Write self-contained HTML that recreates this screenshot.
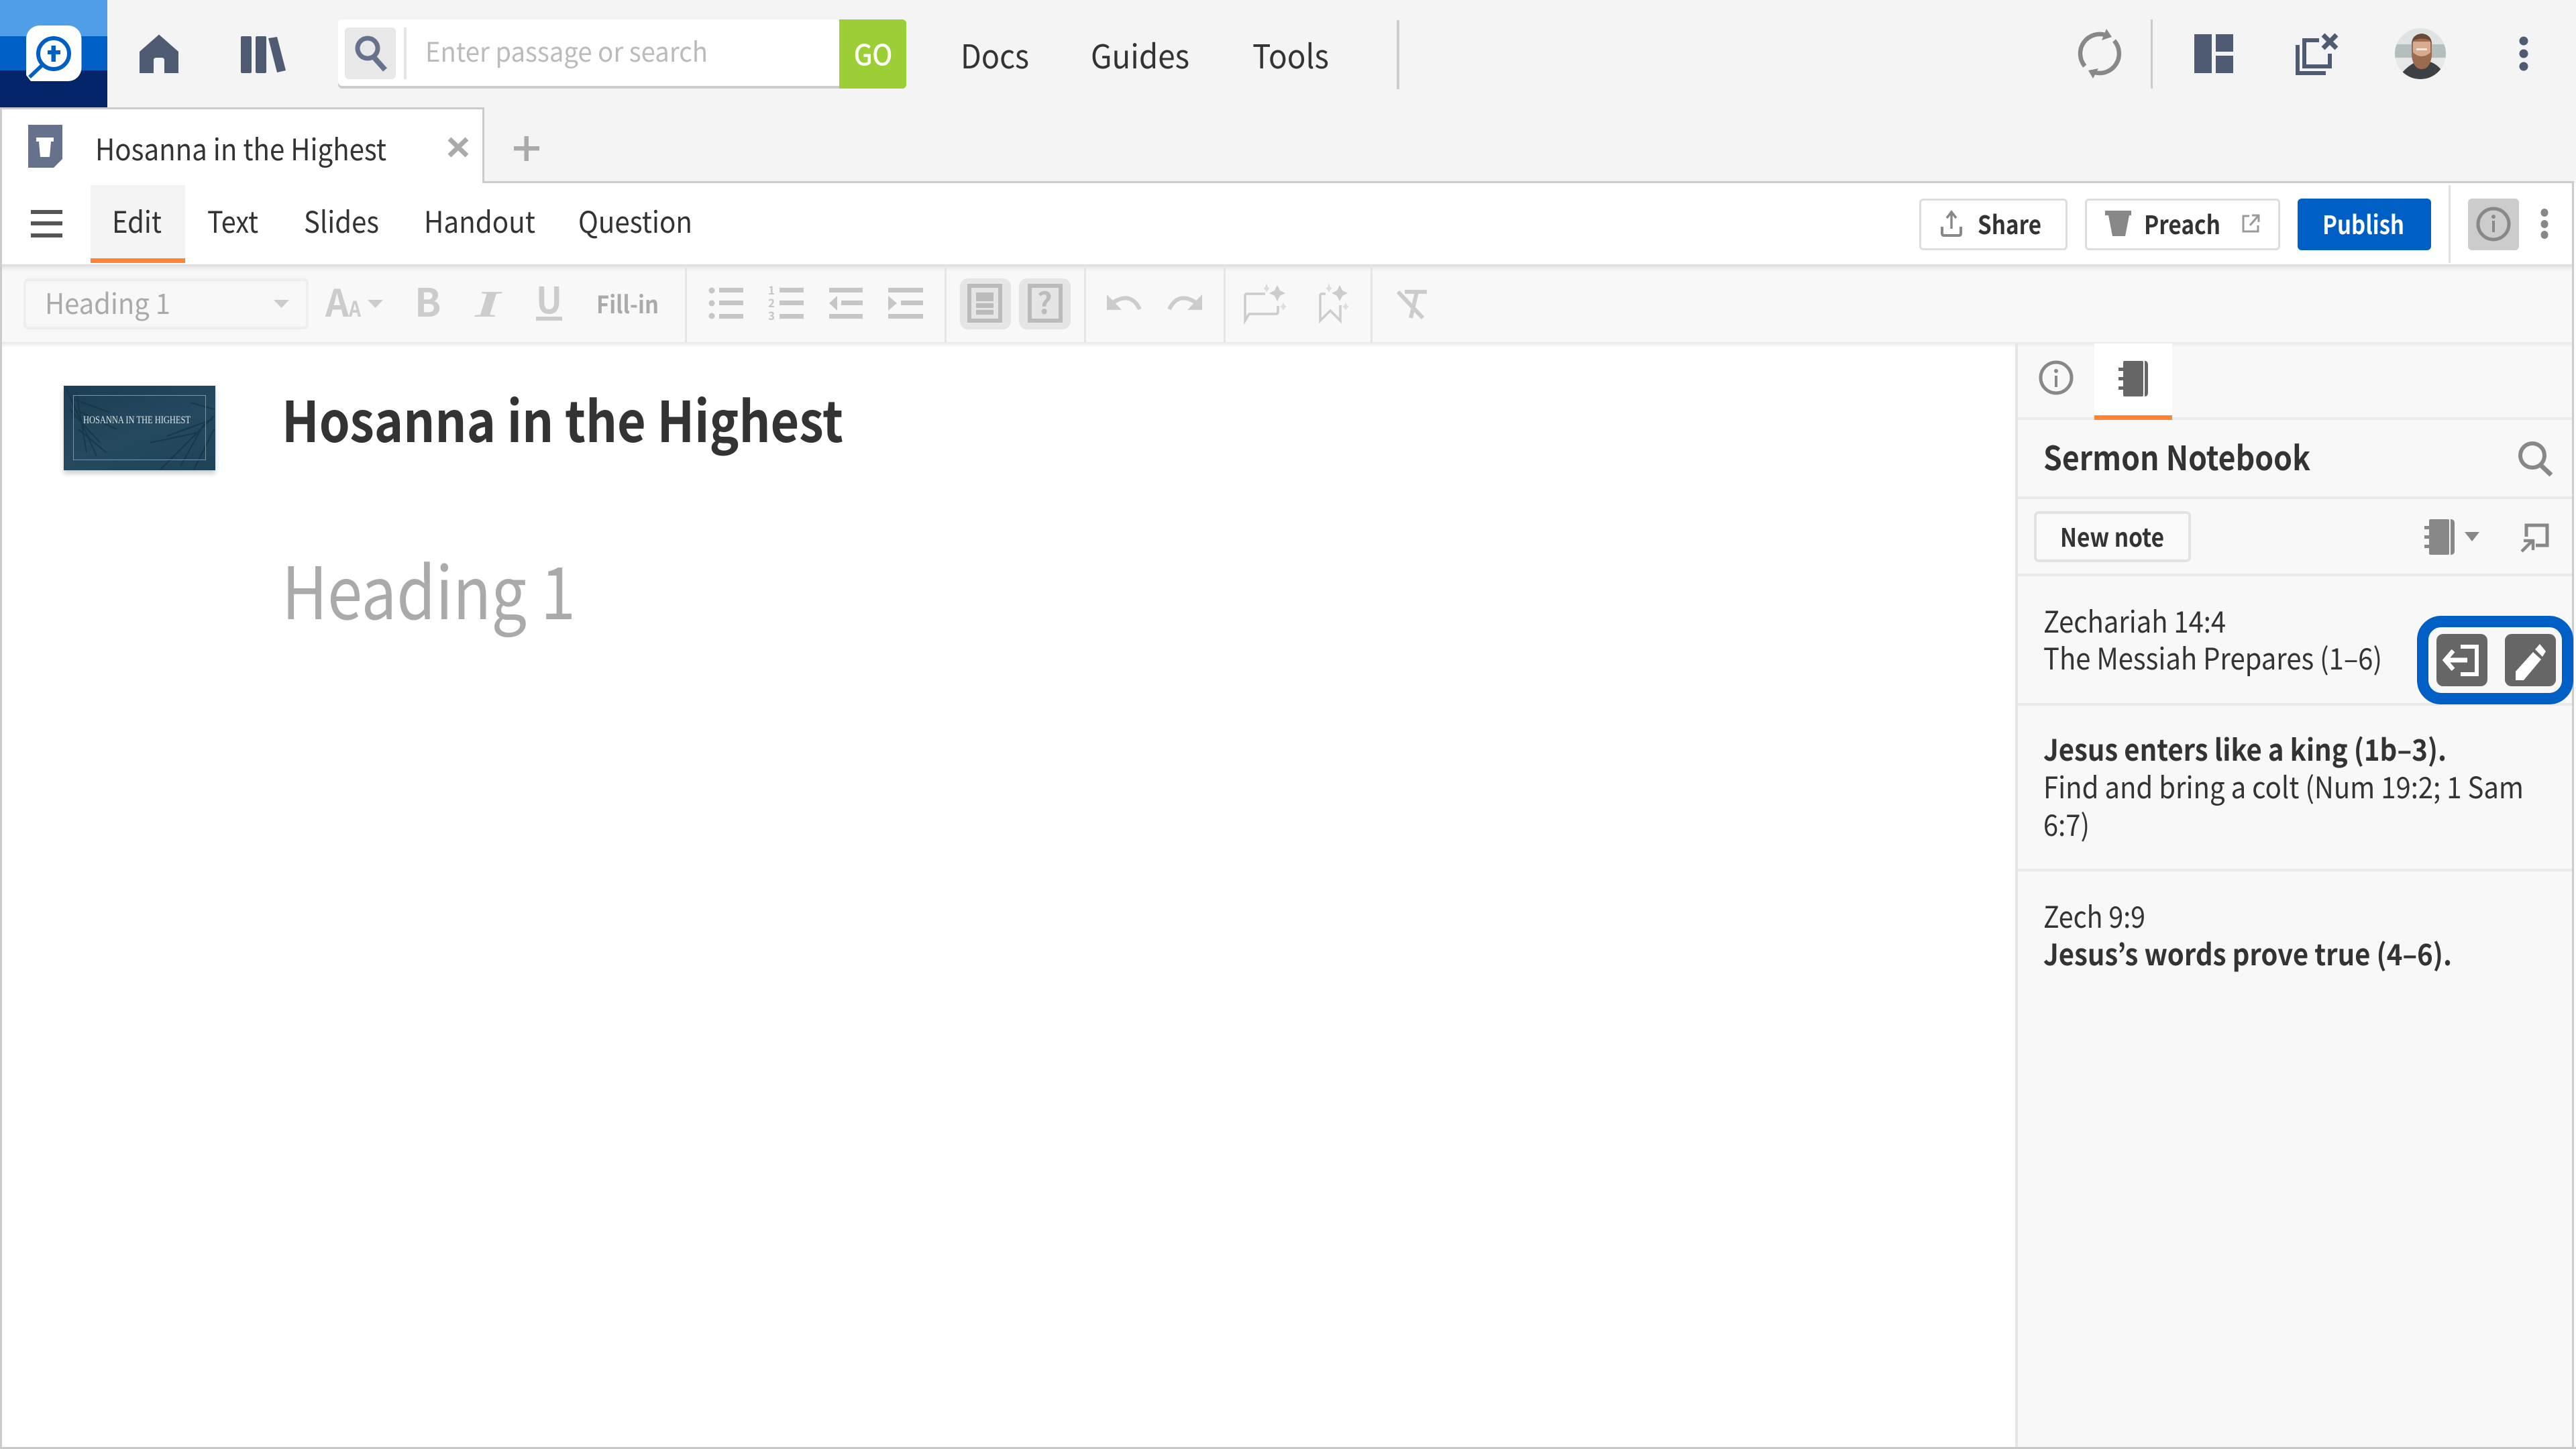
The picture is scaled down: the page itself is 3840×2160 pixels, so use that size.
<!DOCTYPE html>
<html lang="en"><head><meta charset="utf-8"><title>Hosanna in the Highest</title>
<style>
html,body{margin:0;padding:0;width:3840px;height:2160px;overflow:hidden;background:#fff}
.b{position:absolute}
svg{position:absolute;left:0;top:0}
text{font-family:"Noto Sans CJK JP","Liberation Sans",sans-serif;fill:#333}
.sb{font-weight:700}
</style></head><body>
<!-- panels -->
<div class="b" style="left:0;top:0;width:3840px;height:273px;background:#f4f4f4"></div>
<div class="b" style="left:722px;top:270px;width:3115px;height:3px;background:#ccc"></div>
<div class="b" style="left:0;top:160px;width:722px;height:113px;background:#fff;box-sizing:border-box;border:solid #ccc;border-width:3px 3px 0 3px"></div>
<div class="b" style="left:0;top:273px;width:3837px;height:121px;background:#fff"></div>
<div class="b" style="left:135px;top:276px;width:141px;height:109px;background:#f4f4f4"></div>
<div class="b" style="left:135px;top:385px;width:141px;height:7px;background:#ff8533"></div>
<div class="b" style="left:3650px;top:276px;width:3px;height:116px;background:#e2e2e2"></div>
<div class="b" style="left:0;top:394px;width:3837px;height:118px;background:#f8f8f8"></div>
<div class="b" style="left:0;top:394px;width:3837px;height:10px;background:linear-gradient(#dcdcdc,#f8f8f8)"></div>
<div class="b" style="left:0;top:510px;width:3837px;height:8px;background:linear-gradient(#e8e8e8,#fff)"></div>
<!-- sidebar -->
<div class="b" style="left:3004px;top:512px;width:833px;height:1645px;background:#f8f8f8;box-sizing:border-box;border-left:4px solid #e6e6e6"></div>
<div class="b" style="left:3008px;top:512px;width:829px;height:6px;background:linear-gradient(#ececec,#f8f8f8)"></div>
<div class="b" style="left:3122px;top:512px;width:116px;height:107px;background:#fff"></div>
<div class="b" style="left:3008px;top:622px;width:829px;height:4px;background:#eaeaea"></div>
<div class="b" style="left:3122px;top:619px;width:116px;height:7px;background:#ff8533"></div>
<div class="b" style="left:3008px;top:740px;width:829px;height:4px;background:#eaeaea"></div>
<div class="b" style="left:3008px;top:855px;width:829px;height:4px;background:#eaeaea"></div>
<div class="b" style="left:3008px;top:1048px;width:829px;height:4px;background:#eaeaea"></div>
<div class="b" style="left:3008px;top:1295px;width:829px;height:4px;background:#eaeaea"></div>
<!-- page borders -->
<div class="b" style="left:0;top:273px;width:3px;height:1887px;background:#ccc"></div>
<div class="b" style="left:3834px;top:273px;width:3px;height:1887px;background:#ccc"></div>
<div class="b" style="left:0;top:2157px;width:3840px;height:3px;background:#c8c8c8"></div>
<!-- logo bands -->
<div class="b" style="left:0;top:0;width:160px;height:54px;background:#4f9fe6"></div>
<div class="b" style="left:0;top:54px;width:160px;height:51px;background:#005fc4"></div>
<div class="b" style="left:0;top:105px;width:160px;height:55px;background:#05256b"></div>
<!-- search -->
<div class="b" style="left:504px;top:29px;width:847px;height:103px;background:#fff;border-radius:6px;border-bottom:0;box-shadow:inset 0 -4px 0 #ccc"></div>
<div class="b" style="left:514px;top:41px;width:76px;height:77px;background:#e8e8e8;border-radius:6px"></div>
<div class="b" style="left:602px;top:41px;width:4px;height:77px;background:#e5e5e5"></div>
<div class="b" style="left:1251px;top:29px;width:100px;height:103px;background:#9bcf35;border-radius:0 6px 6px 0"></div>
<div class="b" style="left:2082px;top:30px;width:4px;height:103px;background:#ccc"></div>
<div class="b" style="left:3206px;top:29px;width:3px;height:103px;background:#ccc"></div>
<!-- buttons -->
<div class="b" style="left:2861px;top:296px;width:221px;height:77px;box-sizing:border-box;background:#fff;border:3px solid #ddd;border-radius:6px"></div>
<div class="b" style="left:3108px;top:296px;width:291px;height:77px;box-sizing:border-box;background:#fff;border:3px solid #ddd;border-radius:6px"></div>
<div class="b" style="left:3425px;top:296px;width:199px;height:77px;background:#005fc4;border-radius:6px"></div>
<div class="b" style="left:3679px;top:296px;width:76px;height:77px;background:#ccc;border-radius:6px"></div>
<!-- toolbar bits -->
<div class="b" style="left:35px;top:415px;width:425px;height:76px;box-sizing:border-box;border:4px solid #eee;border-radius:7px"></div>
<div class="b" style="left:1021px;top:395px;width:3px;height:116px;background:#e5e5e5"></div>
<div class="b" style="left:1408px;top:395px;width:3px;height:116px;background:#e5e5e5"></div>
<div class="b" style="left:1616px;top:395px;width:3px;height:116px;background:#e5e5e5"></div>
<div class="b" style="left:1824px;top:395px;width:3px;height:116px;background:#e5e5e5"></div>
<div class="b" style="left:2043px;top:395px;width:3px;height:116px;background:#e5e5e5"></div>
<div class="b" style="left:1431px;top:415px;width:76px;height:76px;background:#e5e5e5;border-radius:12px"></div>
<div class="b" style="left:1519px;top:415px;width:77px;height:76px;background:#e5e5e5;border-radius:12px"></div>
<!-- new note -->
<div class="b" style="left:3032px;top:762px;width:234px;height:76px;box-sizing:border-box;background:#f9f9f9;border:4px solid #e2e2e2;border-radius:7px"></div>
<!-- highlight -->
<div class="b" style="left:3603px;top:918px;width:233px;height:132px;box-sizing:border-box;background:#f8f8f8;border:17px solid #005fc4;border-radius:36px"></div>
<div class="b" style="left:3632px;top:945px;width:76px;height:78px;background:#666;border-radius:10px"></div>
<div class="b" style="left:3734px;top:945px;width:76px;height:78px;background:#666;border-radius:10px"></div>
<!-- thumb -->
<div class="b" style="left:95px;top:575px;width:226px;height:126px;background:linear-gradient(160deg,#1c3d52,#25495f 55%,#1e4257);box-shadow:0 5px 7px rgba(0,0,0,.2)"></div>

<svg width="3840" height="2160" viewBox="0 0 3840 2160" xmlns="http://www.w3.org/2000/svg">
<defs><clipPath id="av"><circle cx="3608" cy="80" r="38"/></clipPath><clipPath id="th"><rect x="95" y="575" width="226" height="126"/></clipPath></defs>
<!-- logo -->
<path d="M59 38H101A20 20 0 0 1 121.500 58V101A20 20 0 0 1 101 121H46L39 112V58A20 20 0 0 1 59 38Z" fill="#fff"/>
<circle cx="80" cy="80" r="23" fill="none" stroke="#005fc4" stroke-width="6"/>
<rect x="76.500" y="68" width="6.500" height="24" fill="#005fc4"/><rect x="71" y="75" width="19" height="6" fill="#005fc4"/>
<path d="M63 97L44 115" stroke="#005fc4" stroke-width="5.500"/>
<!-- home / library -->
<path d="M237 51.500L266 77V109H245V90Q245 86 241 86H233Q229 86 229 90V109H208V77Z" fill="#4e5b73"/>
<rect x="359" y="54" width="16" height="55" rx="2" fill="#4e5b73"/><rect x="381" y="54" width="16" height="55" rx="2" fill="#4e5b73"/>
<path d="M400 57L413 55L426 105L413 108Z" fill="#4e5b73"/>
<!-- search icon -->
<circle cx="548" cy="72" r="15" fill="none" stroke="#66728c" stroke-width="7"/><path d="M557 85L574 104" stroke="#66728c" stroke-width="8"/>
<text x="634" y="92" font-size="40" style="fill:#bbb" textLength="421" lengthAdjust="spacingAndGlyphs">Enter passage or search</text>
<text x="1273" y="97" font-size="42" style="fill:#fff;stroke:#fff;stroke-width:1" textLength="57" lengthAdjust="spacingAndGlyphs">GO</text>
<text x="1432" y="102" font-size="49" textLength="102" lengthAdjust="spacingAndGlyphs">Docs</text>
<text x="1626" y="102" font-size="49" textLength="147" lengthAdjust="spacingAndGlyphs">Guides</text>
<text x="1867" y="102" font-size="49" textLength="114" lengthAdjust="spacingAndGlyphs">Tools</text>
<!-- sync -->
<g fill="none" stroke="#888" stroke-width="6.500"><path d="M3107.800 98.600A29 29 0 0 1 3140 52.700"/><path d="M3151.500 60.600A29 29 0 0 1 3122.500 108"/></g>
<path d="M3140 43L3148 55L3133 60Z" fill="#888"/><path d="M3113 105L3128 102L3120 117Z" fill="#888"/>
<!-- layout -->
<g fill="#4e5b73"><rect x="3271" y="51" width="26" height="58"/><rect x="3303" y="51" width="26" height="26"/><rect x="3303" y="83" width="26" height="26"/></g>
<!-- close docs -->
<g fill="none" stroke="#4e5b73" stroke-width="6"><path d="M3425 67V109H3467"/><path d="M3457 60H3435V99H3473V80"/></g>
<path d="M3463 52L3483 72M3483 52L3463 72" stroke="#4e5b73" stroke-width="7"/>
<!-- avatar -->
<g clip-path="url(#av)"><rect x="3570" y="42" width="76" height="76" fill="#dfe3e3"/><rect x="3570" y="66" width="76" height="20" fill="#b4bebc"/><rect x="3570" y="86" width="76" height="32" fill="#e6e8e8"/>
<path d="M3581 108Q3590 98 3600 93L3622 92Q3632 95 3640 105V120H3578Z" fill="#3d4044"/>
<path d="M3595 66Q3595 51 3610 51Q3625 51 3625 66V84Q3622 103 3610 103Q3598 103 3595 84Z" fill="#9c6a4c"/>
<path d="M3597 62H3623V78Q3617 84 3610 84Q3603 84 3597 78Z" fill="#d8ab90"/>
<rect x="3602" y="72" width="16" height="3" fill="#f2e4d8"/>
<path d="M3595 66Q3596 51 3610 50Q3624 51 3625 66L3622 60Q3610 55 3598 60Z" fill="#6a4838"/></g>
<g fill="#4e5b73"><ellipse cx="3762" cy="61" rx="6.500" ry="6.500"/><ellipse cx="3762" cy="80" rx="6.500" ry="6.500"/><ellipse cx="3762" cy="99" rx="6.500" ry="6.500"/></g>
<!-- tab -->
<path d="M42 186H93V237L80 250H42Z" fill="#66728c"/><path d="M54 205H80V211H76L74 234H60L58 211H54Z" fill="#fff"/>
<text x="142" y="239" font-size="44" textLength="434" lengthAdjust="spacingAndGlyphs">Hosanna in the Highest</text>
<path d="M670 207L696 232M696 207L670 232" stroke="#aaa" stroke-width="7"/>
<rect x="781.500" y="203" width="6.500" height="37" fill="#aaa"/><rect x="766" y="218" width="38" height="6.500" fill="#aaa"/>
<!-- row 2 -->
<g fill="#555"><rect x="46" y="313" width="47" height="6"/><rect x="46" y="330" width="47" height="6"/><rect x="46" y="348" width="47" height="6"/></g>
<g font-size="44"><text x="167" y="347" textLength="74" lengthAdjust="spacingAndGlyphs">Edit</text>
<text x="309" y="347" textLength="76" lengthAdjust="spacingAndGlyphs">Text</text>
<text x="453" y="347" textLength="112" lengthAdjust="spacingAndGlyphs">Slides</text>
<text x="632" y="347" textLength="166" lengthAdjust="spacingAndGlyphs">Handout</text>
<text x="862" y="347" textLength="170" lengthAdjust="spacingAndGlyphs">Question</text></g>
<!-- share -->
<path d="M2895 338V348Q2895 351 2898 351H2920Q2923 351 2923 348V338" fill="none" stroke="#888" stroke-width="4"/><path d="M2909 318V341M2902 325L2909 316L2916 325" fill="none" stroke="#888" stroke-width="3.500"/>
<text x="2948" y="349" font-size="38" class="sb" textLength="95" lengthAdjust="spacingAndGlyphs">Share</text>
<path d="M3138 314H3177V321H3174L3168 352H3149L3143 321H3138Z" fill="#888"/>
<text x="3196" y="349" font-size="38" class="sb" textLength="114" lengthAdjust="spacingAndGlyphs">Preach</text>
<path d="M3353 322H3344V345H3366V336M3354 336L3366 322M3357 321H3367V331" fill="none" stroke="#999" stroke-width="3"/>
<text x="3462" y="349" font-size="38" class="sb" style="fill:#fff" textLength="122" lengthAdjust="spacingAndGlyphs">Publish</text>
<circle cx="3717" cy="334" r="23" fill="none" stroke="#888" stroke-width="5"/><circle cx="3717" cy="323" r="3" fill="#888"/><rect x="3715" y="329" width="4" height="17" fill="#888"/>
<g fill="#888"><ellipse cx="3793" cy="317" rx="5.500" ry="6"/><ellipse cx="3793" cy="334" rx="5.500" ry="6"/><ellipse cx="3793" cy="350" rx="5.500" ry="6"/></g>
<!-- format toolbar -->
<text x="67" y="468" font-size="42" style="fill:#aaa" textLength="187" lengthAdjust="spacingAndGlyphs">Heading 1</text>
<path d="M408 447H431L419.500 459Z" fill="#ccc"/>
<text x="485" y="472" font-size="56" class="sb" style="fill:#ccc" textLength="35" lengthAdjust="spacingAndGlyphs">A</text>
<text x="520" y="472" font-size="32" class="sb" style="fill:#ccc" textLength="18" lengthAdjust="spacingAndGlyphs">A</text>
<path d="M548 447H571L559.500 459Z" fill="#ccc"/>
<text x="618" y="472" font-size="58" class="sb" style="fill:#ccc">B</text>
<text x="708" y="472" font-size="56" font-weight="700" font-style="italic" style="fill:#ccc;font-family:'Liberation Serif',serif" textLength="38" lengthAdjust="spacingAndGlyphs">I</text>
<text x="799" y="467" font-size="54" class="sb" style="fill:#ccc" textLength="39" lengthAdjust="spacingAndGlyphs">U</text><rect x="799" y="472" width="39" height="6" fill="#ccc"/>
<text x="889" y="467" font-size="36" class="sb" style="fill:#aaa" textLength="93" lengthAdjust="spacingAndGlyphs">Fill-in</text>
<g fill="#c6c6c6">
<ellipse cx="1061" cy="433" rx="4.500" ry="4.500"/><ellipse cx="1061" cy="452" rx="4.500" ry="4.500"/><ellipse cx="1061" cy="471" rx="4.500" ry="4.500"/>
<rect x="1072" y="429" width="36" height="7"/><rect x="1072" y="448" width="36" height="7"/><rect x="1072" y="468" width="36" height="7"/>
<rect x="1162" y="429" width="36" height="7"/><rect x="1162" y="448" width="36" height="7"/><rect x="1162" y="468" width="36" height="7"/>
<rect x="1236" y="429" width="50" height="7"/><path d="M1248 441V463L1236 452Z"/><rect x="1254" y="448" width="32" height="7"/><rect x="1236" y="468" width="50" height="7"/>
<rect x="1324" y="429" width="52" height="7"/><path d="M1324 441V463L1337 452Z"/><rect x="1343" y="448" width="33" height="7"/><rect x="1324" y="468" width="52" height="7"/>
</g>
<g font-size="17" class="sb" style="fill:#c6c6c6"><text x="1145" y="439" style="fill:#c6c6c6" font-weight="700">1</text><text x="1145" y="458" style="fill:#c6c6c6" font-weight="700">2</text><text x="1145" y="477" style="fill:#c6c6c6" font-weight="700">3</text></g>
<rect x="1445" y="426" width="46" height="52" fill="none" stroke="#bbb" stroke-width="6"/>
<g fill="#bbb"><rect x="1455" y="436" width="26" height="13"/><rect x="1455" y="452" width="26" height="7"/><rect x="1455" y="462" width="26" height="7"/></g>
<rect x="1535" y="426" width="46" height="52" fill="none" stroke="#bbb" stroke-width="6"/>
<text x="1546" y="468" font-size="44" class="sb" style="fill:#bbb">?</text>
<path d="M1650 439V462H1672Z" fill="#ccc"/><path d="M1659 451Q1686 434 1699 461" fill="none" stroke="#ccc" stroke-width="6"/>
<path d="M1792 439V462H1770Z" fill="#ccc"/><path d="M1783 451Q1756 434 1743 461" fill="none" stroke="#ccc" stroke-width="6"/>
<path d="M1886 438H1859Q1856 438 1856 441V478L1862 468H1902Q1905 468 1905 465V456" fill="none" stroke="#ccc" stroke-width="3.500"/>
<path d="M1904 425L1908 433L1916 437L1908 441L1904 449L1900 441L1892 437L1900 433Z" fill="#ccc"/>
<path d="M1888 422L1890 428L1893 430L1890 432L1888 436L1886 432L1883 430L1886 428Z" fill="#ddd"/><path d="M1913 451L1915 455L1918 457L1915 459L1913 463L1911 459L1908 457L1911 455Z" fill="#ddd"/>
<path d="M1976 438H1971Q1968 438 1968 441V478L1983 463L1998 478V455" fill="none" stroke="#ccc" stroke-width="3.500"/>
<path d="M1997 425L2001 433L2009 437L2001 441L1997 449L1993 441L1985 437L1993 433Z" fill="#ccc"/>
<path d="M1981 422L1983 428L1986 430L1983 432L1981 436L1979 432L1976 430L1979 428Z" fill="#ddd"/><path d="M2006 451L2008 455L2011 457L2008 459L2006 463L2004 459L2001 457L2004 455Z" fill="#ddd"/>
<path d="M2094 435H2127M2112 435L2103 474M2084 435L2121 474" fill="none" stroke="#ccc" stroke-width="6"/>
<!-- thumb art -->
<g clip-path="url(#th)" fill="none" stroke="#163244" stroke-width="2" opacity=".7">
<path d="M99 580L144 680M114 585L129 675M104 610L149 660M109 595L164 615M111 610L174 640M117 640L159 675"/>
<path d="M319 620L239 700M319 640L289 700M317 625L249 650M319 610L284 600M304 632L269 695M294 645L224 660"/>
</g>
<rect x="109.500" y="589.500" width="197" height="96" fill="none" stroke="#7b95a2" stroke-width="1"/>
<text x="124" y="631" font-size="16" style="fill:#dfe7ea;font-family:'Liberation Serif',serif" textLength="160" lengthAdjust="spacingAndGlyphs">HOSANNA IN THE HIGHEST</text>
<!-- doc -->
<text x="420" y="659" font-size="84" class="sb" textLength="837" lengthAdjust="spacingAndGlyphs">Hosanna in the Highest</text>
<text x="420" y="923" font-size="108" style="fill:#aaa" textLength="438" lengthAdjust="spacingAndGlyphs">Heading 1</text>
<!-- sidebar -->
<circle cx="3065" cy="563" r="23" fill="none" stroke="#888" stroke-width="5"/><circle cx="3065" cy="553" r="3" fill="#888"/><rect x="3063" y="560" width="4" height="17" fill="#888"/>
<g fill="#666"><rect x="3165" y="538" width="30" height="53" rx="2"/><path d="M3197 538Q3202 538 3202 544V585Q3202 591 3197 591Z"/><rect x="3158" y="548" width="8" height="5"/><rect x="3158" y="562" width="8" height="5"/><rect x="3158" y="576" width="8" height="5"/></g>
<text x="3046" y="701" font-size="50" class="sb" textLength="398" lengthAdjust="spacingAndGlyphs">Sermon Notebook</text>
<circle cx="3775" cy="679" r="18" fill="none" stroke="#888" stroke-width="6"/><path d="M3787 693L3803 708" stroke="#888" stroke-width="7"/>
<text x="3071" y="815" font-size="38" class="sb" textLength="155" lengthAdjust="spacingAndGlyphs">New note</text>
<g fill="#888"><rect x="3621" y="774" width="30" height="53" rx="2"/><path d="M3653 774Q3659 774 3659 780V821Q3659 827 3653 827Z"/><rect x="3614" y="784" width="8" height="5"/><rect x="3614" y="798" width="8" height="5"/><rect x="3614" y="812" width="8" height="5"/></g>
<path d="M3674 793H3696L3685 807Z" fill="#888"/>
<path d="M3766 800V783H3797V813H3780" fill="none" stroke="#888" stroke-width="5"/><path d="M3776 805L3759 822M3762 806H3776V820" fill="none" stroke="#888" stroke-width="4.500"/>
<g font-size="44">
<text x="3046" y="943" textLength="272" lengthAdjust="spacingAndGlyphs">Zechariah 14:4</text>
<text x="3046" y="998" textLength="505" lengthAdjust="spacingAndGlyphs">The Messiah Prepares (1–6)</text>
<text x="3046" y="1134" class="sb" textLength="601" lengthAdjust="spacingAndGlyphs">Jesus enters like a king (1b–3).</text>
<text x="3046" y="1190" textLength="716" lengthAdjust="spacingAndGlyphs">Find and bring a colt (Num 19:2; 1 Sam</text>
<text x="3046" y="1246" textLength="69" lengthAdjust="spacingAndGlyphs">6:7)</text>
<text x="3046" y="1383" textLength="152" lengthAdjust="spacingAndGlyphs">Zech 9:9</text>
<text x="3046" y="1439" class="sb" textLength="609" lengthAdjust="spacingAndGlyphs">Jesus’s words prove true (4–6).</text>
</g>
<path d="M3668 964H3692V1005H3668" fill="none" stroke="#fff" stroke-width="6"/><path d="M3646 984H3678" stroke="#fff" stroke-width="7"/><path d="M3657 970L3645 984L3657 998" fill="none" stroke="#fff" stroke-width="6.500"/>
<path d="M3750 1014V1001L3776 972L3788 983L3762 1014Z" fill="#fff"/><path d="M3779 968L3786 960L3795 971L3790 979Z" fill="#fff"/>
</svg>
</body></html>
